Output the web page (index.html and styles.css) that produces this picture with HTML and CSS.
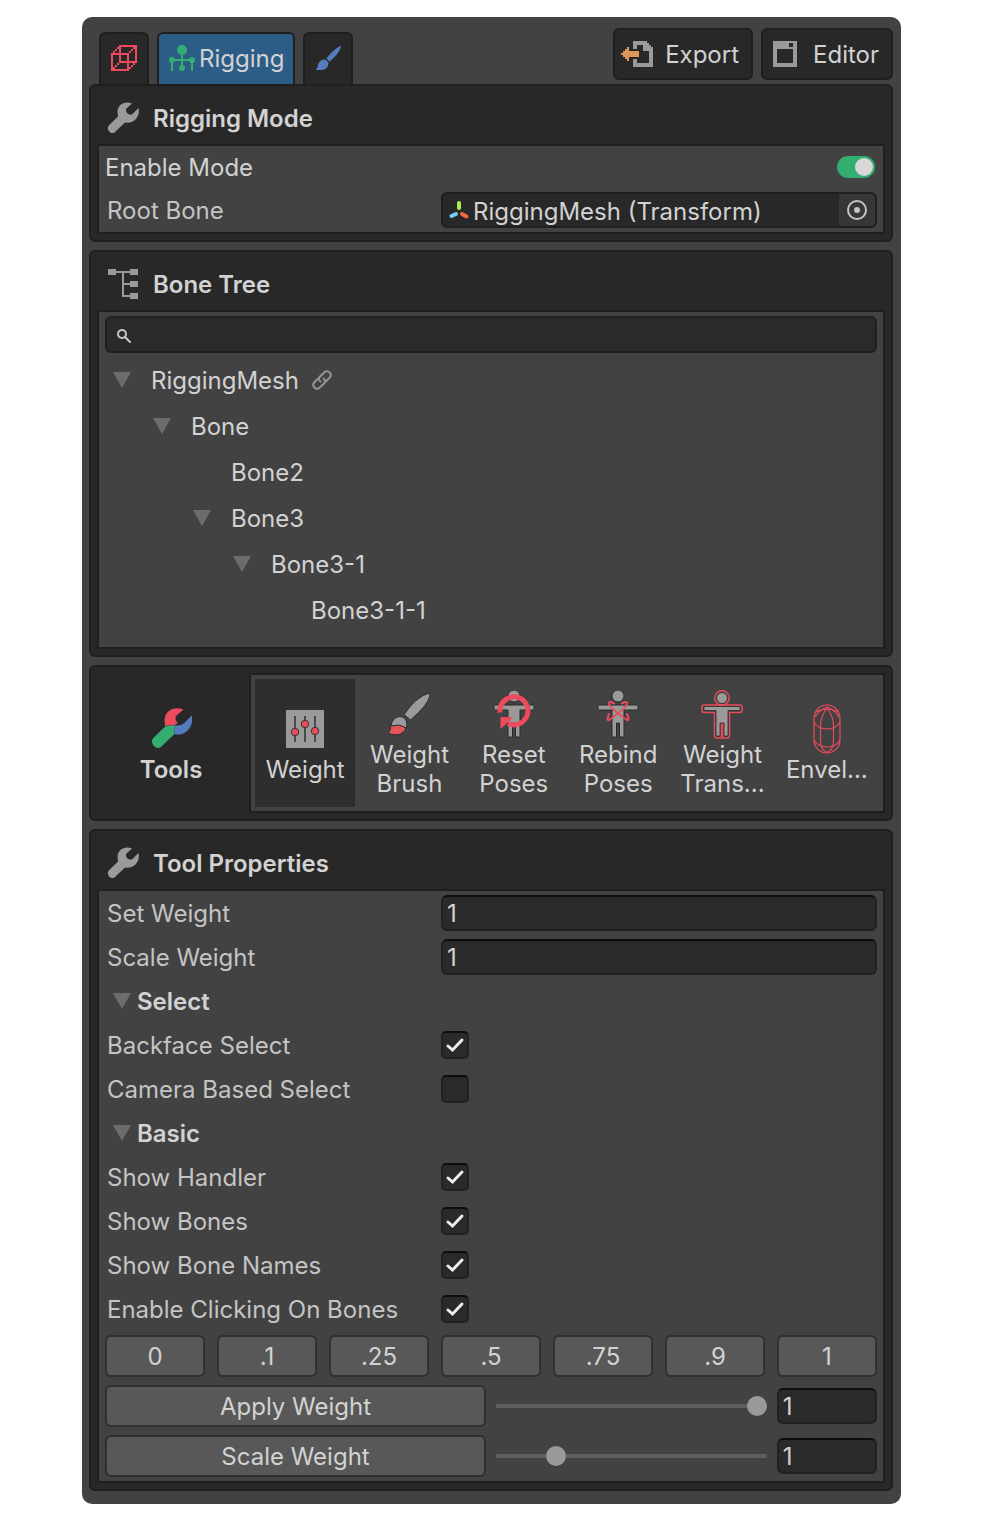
FILE: index.html
```html
<!DOCTYPE html>
<html lang="en">
<head>
<meta charset="utf-8">
<meta name="viewport" content="width=device-width, initial-scale=1">
<title>Rigging</title>
<link rel="stylesheet" href="styles.css">
</head>
<body>
<svg class="defs" aria-hidden="true">
  <symbol id="wrench" viewBox="0 0 32 32"><path d="M25 1.5C18-1.5 10.500 2.500 10.500 10L11 14.500 1.800 23.500C-1 26.500 3 33 7.500 30.500L18 20.500C27 22.500 33.500 14 31.500 6L25.500 12Q23 13.500 20.500 11.500 18 9 19.500 6.500Z"/></symbol>
  <symbol id="person" viewBox="0 0 48 48"><circle cx="24" cy="6" r="6"/><path d="M5 15H43Q44 15 44 16V19Q44 20 43 20H30V47H25.500V33H22.500V47H18V20H5Q4 20 4 19V16Q4 15 5 15Z"/></symbol>
</svg>
<main class="window">
  <header class="topbar">
    <nav class="tabs" aria-label="Mode">
      <button class="tab" aria-label="Mesh">
        <svg class="cube" viewBox="0 0 13 13" shape-rendering="crispEdges"><path d="M.5 4.500h8v8h-8zM4.500.5h8v8h-8z" fill="none" stroke="#eb4b5c"/><path d="M1 3h1v1H1zM2 2h1v1H2zM3 1h1v1H3zM9 3h1v1H9zM10 2h1v1h-1zM11 1h1v1h-1zM1 11h1v1H1zM2 10h1v1H2zM3 9h1v1H3zM9 11h1v1H9zM10 10h1v1h-1zM11 9h1v1h-1z" fill="#eb4b5c"/></svg>
      </button>
      <button class="tab tab-active" aria-current="page">
        <svg class="rig" viewBox="0 0 28 28" fill="#33ad70"><circle cx="14" cy="6" r="5"/><circle cx="4" cy="16" r="3"/><circle cx="24" cy="16" r="3"/><circle cx="14" cy="24" r="3"/><path d="M13 8h2v16h-2zM4 15h20v2H4zM3 16h2v11H3zM23 16h2v11h-2z"/></svg>
        <span>Rigging</span>
      </button>
      <button class="tab" aria-label="Paint">
        <svg class="paint" viewBox="0 0 28 28" fill="#557dbd"><path d="M26 2Q27 1 26.800 3.500 24 11 15.500 17.500L12.500 14.500Q18 6.500 26 2Z"/><path d="M11.500 15.500 14.500 18.500Q14 26 7.500 26H1.500Q4 24 4 20.500 5.500 15.500 11.500 15.500Z"/></svg>
      </button>
    </nav>
    <div class="actions">
      <button class="action">
        <svg class="icon" viewBox="0 0 32 32" shape-rendering="crispEdges"><path d="M12 3H26V5H28V7H30V9H32V29H12V21H16V25H28V13H22V7H16V11H12Z" fill="#9a9a9a"/><path d="M0 15H2V13H4V11H6V9H8V13H18V19H8V23H6V21H4V19H2V17H0Z" fill="#df9757"/></svg>
        <span>Export</span>
      </button>
      <button class="action">
        <svg class="icon" viewBox="0 0 32 32" shape-rendering="crispEdges"><path d="M4 3H28V29H4ZM8 11V25H24V11ZM20 5V9H24V5Z" fill="#9a9a9a" fill-rule="evenodd"/></svg>
        <span>Editor</span>
      </button>
    </div>
  </header>

  <section class="panel">
    <h2 class="panel-title"><svg class="icon gray"><use href="#wrench"/></svg>Rigging Mode</h2>
    <div class="panel-body">
      <div class="mode-row">
        <label for="mode">Enable Mode</label>
        <input class="toggle" type="checkbox" role="switch" id="mode" checked>
      </div>
      <div class="row">
        <label class="row-label" for="root">Root Bone</label>
        <div class="object-field">
          <svg class="axes" viewBox="0 0 20 20" stroke-width="4" stroke-linecap="round"><path d="M10 3V8" stroke="#a8f04d"/><path d="M7 14 2.500 16" stroke="#73cdfa"/><path d="M13 14 17.500 16.500" stroke="#f76a3d"/></svg>
          <input class="object-name" id="root" value="RiggingMesh (Transform)" readonly>
          <button class="picker" aria-label="Pick object"><svg class="target" viewBox="0 0 20 20"><circle cx="10" cy="10" r="9" fill="none" stroke="#c4c4c4" stroke-width="2"/><circle cx="10" cy="10" r="3" fill="#c4c4c4"/></svg></button>
        </div>
      </div>
    </div>
  </section>

  <section class="panel">
    <h2 class="panel-title"><svg class="icon gray" viewBox="0 0 32 32" shape-rendering="crispEdges"><path d="M1 1h8v6H1zM23 1h8v6h-8zM23 13h8v6h-8zM23 25h8v6h-8zM9 3h14v2H9zM15 3h2v26h-2zM15 15h8v2h-8zM15 27h8v2h-8z"/></svg>Bone Tree</h2>
    <div class="panel-body">
      <div class="search">
        <svg class="lens" viewBox="0 0 16 16" fill="none" stroke="#c8c8c8" stroke-width="2"><circle cx="6" cy="6" r="4"/><path d="M9 9 14 14" stroke-linecap="round"/></svg>
        <input class="search-input" type="search" aria-label="Search bones">
      </div>
      <ul class="tree">
        <li>
          <div class="node"><button class="arrow" aria-label="Collapse"></button>RiggingMesh
            <svg class="link" viewBox="0 0 20 20" fill="none" stroke="#949494" stroke-width="2" stroke-linecap="round"><path d="M8.500 11.500Q5.500 9 8 6.500L12.500 2.300Q15 0 17.600 2.400 20 5 17.800 7.500L14.500 11"/><path d="M11.500 8.500Q14.500 11 12 13.500L7.500 17.700Q5 20 2.400 17.600 0 15 2.200 12.500L5.500 9"/></svg>
          </div>
          <ul>
            <li>
              <div class="node"><button class="arrow" aria-label="Collapse"></button>Bone</div>
              <ul>
                <li><div class="node leaf">Bone2</div></li>
                <li>
                  <div class="node"><button class="arrow" aria-label="Collapse"></button>Bone3</div>
                  <ul>
                    <li>
                      <div class="node"><button class="arrow" aria-label="Collapse"></button>Bone3-1</div>
                      <ul><li><div class="node leaf">Bone3-1-1</div></li></ul>
                    </li>
                  </ul>
                </li>
              </ul>
            </li>
          </ul>
        </li>
      </ul>
    </div>
  </section>

  <section class="panel tools">
    <h2 class="tools-title">
      <svg class="tool-icon" viewBox="-3 -2 37 37">
        <clipPath id="red"><path d="M0-2H40V0L18 13.600 0 15Z"/></clipPath>
        <clipPath id="green"><path d="M-2 15 10 14.500 18.200 13.600 17.800 20 17 40H-2Z"/></clipPath>
        <path d="M25 1.500C18-1.500 10.500 2.500 10.500 10L11 14.500 1.800 23.500C-1 26.500 3 33 7.500 30.500L18 20.500C27 22.500 33.500 14 31.500 6L25.500 12Q23 13.500 20.500 11.500 18 9 19.500 6.500Z" fill="#eb4b5c" clip-path="url(#red)"/>
        <path d="M18 20.500C27 22.500 33.500 14 31.500 6L25.500 12Q23 14.500 18 13.600Z" fill="#557dbd"/>
        <path d="M25 1.500C18-1.500 10.500 2.500 10.500 10L11 14.500 1.800 23.500C-1 26.500 3 33 7.500 30.500L18 20.500Z" fill="#33ad70" clip-path="url(#green)"/>
      </svg>
      <span>Tools</span>
    </h2>
    <div class="toolbar">
      <button class="tool tool-active">
        <svg class="tool-icon" viewBox="0 0 48 48"><rect x="5" y="5" width="38" height="38" fill="#9a9a9a"/><path d="M14 11V37M24 11V37M34 11V37" stroke="#4a4a4a" stroke-width="2"/><g fill="#eb4b5c" stroke="#333" stroke-width="1"><circle cx="14" cy="27" r="3.700"/><circle cx="24" cy="19" r="3.700"/><circle cx="34" cy="26" r="3.700"/></g></svg>
        <span class="tool-name">Weight</span>
      </button>
      <button class="tool">
        <svg class="tool-icon" viewBox="0 0 48 48" stroke="#2b2b2b" stroke-width="1"><path d="M43 3.500Q45 2.500 45 5 44 14 25.500 30L19 24.500Q31 7 43 3.500Z" fill="#9a9a9a"/><path d="M6 35C8 26 17 24 21 30 22 33 22 36 21 38Q16 35 12 36 9 37 6 35Z" fill="#9a9a9a"/><path d="M6 35Q9 37 12 35 16 35 21 38C18 46 9 46 3 43 6 41 5 38 6 35Z" fill="#e05659"/></svg>
        <span class="tool-name">Weight Brush</span>
      </button>
      <button class="tool">
        <svg class="tool-icon" viewBox="0 0 48 48"><use href="#person" class="figure"/><path d="M10 22.500A14 14 0 1 1 18 33.500" fill="none" stroke="#eb4b5c" stroke-width="5"/><path d="M10.500 27H23L19 31.500 10.500 39Z" fill="#eb4b5c"/></svg>
        <span class="tool-name">Reset Poses</span>
      </button>
      <button class="tool">
        <svg class="tool-icon" viewBox="0 0 48 48"><use href="#person" class="figure"/><path d="M20 13.500Q14 10.500 15 14 17 19 33 30Q36 31 33 24M28 13.500Q34 10.500 33 14 31 19 15 30 12 31 15 24" fill="none" stroke="#eb4b5c" stroke-width="2" stroke-linecap="round"/></svg>
        <span class="tool-name">Rebind Poses</span>
      </button>
      <button class="tool">
        <svg class="tool-icon" viewBox="0 0 48 48"><g fill="none" stroke="#eb4b5c" stroke-width="1.500"><circle cx="24" cy="8" r="7.200"/><path d="M6 15H42Q44 15 44 17V20Q44 22.500 42 22.500H31.500V46Q31.500 48 29 48H19Q16.500 48 16.500 46V22.500H6Q4 22.500 4 20V17Q4 15 6 15ZM23.200 47V34H24.800V47"/></g><g fill="#9a9a9a" stroke="#2b2b2b" stroke-width=".8"><circle cx="24" cy="8" r="5.500"/><path d="M6 16.500H42V20.500H30V46H26V33H22V46H18V20.500H6Z"/></g></svg>
        <span class="tool-name">Weight Trans...</span>
      </button>
      <button class="tool">
        <svg class="tool-icon" viewBox="0 0 48 48" fill="none" stroke="#eb4b5c" stroke-width="1.200"><rect x="11" y="0" width="26" height="48" rx="13"/><path d="M11 17Q15 24 24 24T37 17M11 35Q15 42 24 42T37 35M13 7Q18 4 24 4T35 7M24 3Q17.500 12 17.500 20V37Q18 45 24 47.500M24 3Q30.500 12 30.500 20V37Q30 45 24 47.500M12 12Q15 6 24 2 33 6 36 12"/></svg>
        <span class="tool-name">Envel...</span>
      </button>
    </div>
  </section>

  <section class="panel">
    <h2 class="panel-title"><svg class="icon gray"><use href="#wrench"/></svg>Tool Properties</h2>
    <div class="panel-body properties">
      <div class="row"><label class="row-label" for="set">Set Weight</label><input class="field" id="set" value="1"></div>
      <div class="row"><label class="row-label" for="scale">Scale Weight</label><input class="field" id="scale" value="1"></div>
      <button class="foldout" aria-expanded="true"><i class="triangle"></i>Select</button>
      <div class="row"><label class="row-label" for="backface">Backface Select</label><input class="check" type="checkbox" id="backface" checked></div>
      <div class="row"><label class="row-label" for="camera">Camera Based Select</label><input class="check" type="checkbox" id="camera"></div>
      <button class="foldout" aria-expanded="true"><i class="triangle"></i>Basic</button>
      <div class="row"><label class="row-label" for="handler">Show Handler</label><input class="check" type="checkbox" id="handler" checked></div>
      <div class="row"><label class="row-label" for="bones">Show Bones</label><input class="check" type="checkbox" id="bones" checked></div>
      <div class="row"><label class="row-label" for="names">Show Bone Names</label><input class="check" type="checkbox" id="names" checked></div>
      <div class="row"><label class="row-label" for="clicking">Enable Clicking On Bones</label><input class="check" type="checkbox" id="clicking" checked></div>
      <div class="presets">
        <button class="button">0</button><button class="button">.1</button><button class="button">.25</button><button class="button">.5</button><button class="button">.75</button><button class="button">.9</button><button class="button">1</button>
      </div>
      <div class="apply">
        <button class="button">Apply Weight</button>
        <input class="slider" type="range" min="0" max="1" step="0.01" value="1" aria-label="Apply weight amount">
        <input class="field" value="1" aria-label="Apply weight value">
      </div>
      <div class="apply">
        <button class="button">Scale Weight</button>
        <input class="slider" type="range" min="0" max="5" step="0.01" value="1" aria-label="Scale weight amount">
        <input class="field" value="1" aria-label="Scale weight value">
      </div>
    </div>
  </section>
</main>
</body>
</html>
```
FILE: styles.css
```css
* { box-sizing: border-box; }

body {
  margin: 0;
  padding: 17px 82px 16px;
  background: #fff;
  color: #d2d2d2;
  font: 24px/29px Inter, "Liberation Sans", sans-serif;
  font-optical-sizing: none;
}

button, input { margin: 0; padding: 0; border: 0; background: none; color: inherit; font: inherit; font-optical-sizing: none; min-width: 0; border-radius: 0; }
h2, ul { margin: 0; padding: 0; font: inherit; list-style: none; }
svg { display: block; flex: none; overflow: visible; }

.defs { display: none; }

.window { padding: 11px 8px 13px 7px; border-radius: 10px; background: #424242; }

.topbar { display: flex; justify-content: space-between; height: 56px; padding-left: 10px; }
.tabs, .actions { display: flex; gap: 8px; }
.tabs { align-items: flex-end; }
.actions { align-items: flex-start; }

.tab {
  display: flex; align-items: center; justify-content: center; gap: 3px;
  height: 52px; min-width: 50px; padding: 0 9px 2px;
  border: 2px solid #1f1f1f; border-bottom: 0; border-radius: 6px 6px 0 0;
  background: #282828;
}
.tab-active { background: #2c5d87; }
.cube { width: 26px; height: 26px; }
.rig, .paint { width: 28px; height: 28px; }

.action {
  display: flex; align-items: center; gap: 12px;
  height: 52px; padding: 0 12px 0 6px;
  border: 2px solid #1f1f1f; border-radius: 6px; background: #282828;
}

.icon { width: 32px; height: 32px; }
.gray { fill: #9a9a9a; }

.panel { padding: 6px; border: 2px solid #1f1f1f; border-radius: 6px; background: #282828; }
.panel + .panel { margin-top: 8px; }
.panel-title { display: flex; align-items: center; gap: 14px; height: 52px; padding-left: 10px; font-weight: 600; }
.panel-body { padding: 4px 6px; border: 2px solid #1f1f1f; background: #424242; }

.mode-row { display: flex; align-items: center; justify-content: space-between; height: 34px; padding-right: 2px; margin-bottom: 8px; }
.toggle {
  appearance: none; display: flex; align-items: center; justify-content: flex-end;
  width: 38px; height: 22px; padding: 2px; border-radius: 11px; background: #33ad70;
}
.toggle::before { content: ""; width: 18px; height: 18px; border-radius: 50%; background: #d8d8d8; }
.toggle:not(:checked) { justify-content: flex-start; background: #282828; }

.row { display: grid; grid-template-columns: repeat(7, 1fr); column-gap: 12px; align-items: center; min-height: 36px; }
.row-label { grid-column: span 3; padding-left: 2px; color: #c4c4c4; }
.row .field, .object-field { grid-column: span 4; }

.object-field { display: flex; align-items: center; height: 36px; padding-left: 6px; border: 2px solid #1f1f1f; border-radius: 6px; background: #282828; overflow: hidden; }
.axes { width: 20px; height: 20px; }
.object-name { flex: 1; height: 32px; padding: 2px 0 0 4px; outline: 0; }
.picker { display: flex; align-items: center; justify-content: center; width: 36px; height: 32px; background: #373737; }
.target { width: 20px; height: 20px; }

.search { display: flex; align-items: center; height: 37px; padding: 2px 0 0 9px; border: 2px solid #1f1f1f; border-radius: 6px; background: #2a2a2a; }
.lens { width: 16px; height: 16px; }
.search-input { flex: 1; appearance: none; height: 30px; padding-left: 8px; outline: 0; }

.tree { padding: 4px 0 10px; }
.tree ul { padding-left: 40px; }
.node { display: flex; align-items: center; height: 46px; padding-left: 8px; }
.leaf { padding-left: 46px; }
.link { width: 20px; height: 20px; margin-left: 13px; }
.arrow { width: 18px; height: 16px; margin-right: 20px; background: #6c6c6c; clip-path: polygon(0 0, 100% 0, 50% 100%); }

.tools { display: flex; align-items: stretch; }
.tools-title { display: flex; flex-direction: column; align-items: center; justify-content: center; gap: 2px; width: 152px; padding: 2px 4px 0 0; font-weight: 600; }
.toolbar { flex: 1; display: grid; grid-template-columns: repeat(6, minmax(0, 1fr)); gap: 4px; padding: 4px 6px 4px 4px; border: 2px solid #1f1f1f; background: #424242; }
.tool { display: flex; flex-direction: column; align-items: center; justify-content: center; gap: 2px; height: 128px; padding-top: 2px; }
.tool-active { background: #2e2e2e; }
.tool-icon { width: 48px; height: 48px; }
.tool-name { max-width: 100px; }
.figure { fill: #9a9a9a; stroke: #2b2b2b; stroke-width: 1; }

.properties { display: grid; gap: 8px; }
.field { width: 100%; height: 36px; padding: 0 4px; border: 2px solid #212121; border-top-color: #0d0d0d; border-radius: 6px; background: #2a2a2a; }

.foldout { display: flex; align-items: center; gap: 6px; height: 36px; padding-left: 8px; font-weight: 600; }
.triangle { width: 18px; height: 16px; background: #6c6c6c; clip-path: polygon(0 0, 100% 0, 50% 100%); }

.check { appearance: none; width: 28px; height: 28px; border: 2px solid #212121; border-top-color: #0d0d0d; border-radius: 5px; background: #2a2a2a; }
.check:checked { background: #2a2a2a url("data:image/svg+xml,%3Csvg xmlns='http://www.w3.org/2000/svg' viewBox='0 0 24 24'%3E%3Cpath d='M5 13 9.500 17 19 7' fill='none' stroke='%23eee' stroke-width='3' stroke-linecap='round'/%3E%3C/svg%3E") center / 24px no-repeat; }

.presets { display: grid; grid-template-columns: repeat(7, 1fr); gap: 12px; }
.button { height: 42px; border: 2px solid #303030; border-radius: 6px; background: #585858; }

.apply { display: grid; grid-template-columns: 38fr 27fr 10fr; column-gap: 10px; align-items: center; }
.slider { appearance: none; width: 100%; height: 20px; }
.slider::-webkit-slider-runnable-track { height: 20px; background: linear-gradient(#5e5e5e, #5e5e5e) center / 100% 4px no-repeat; }
.slider::-webkit-slider-thumb { appearance: none; width: 20px; height: 20px; border-radius: 50%; background: #999; }
```
